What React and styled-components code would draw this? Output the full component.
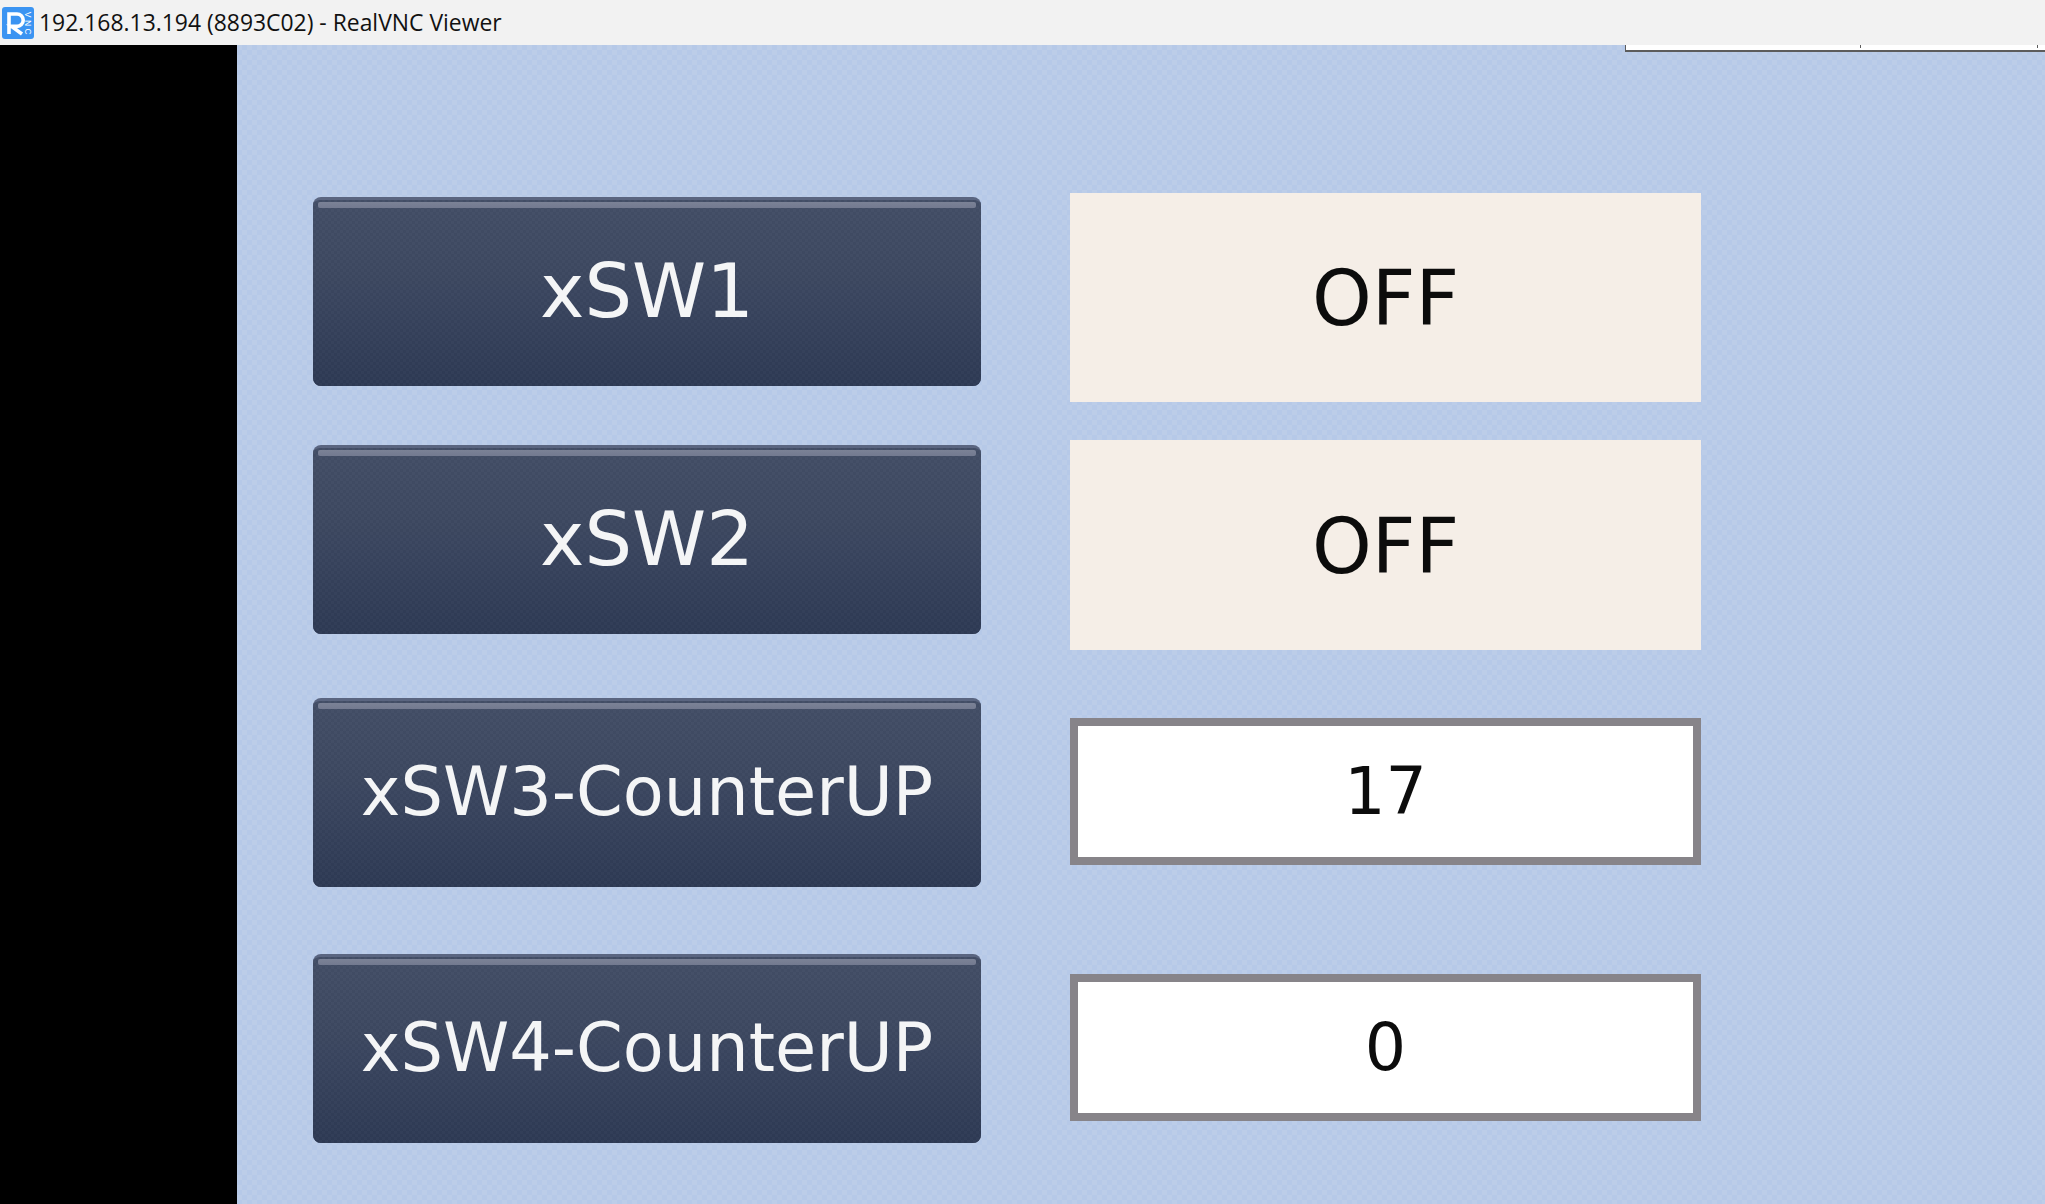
import React from 'react'
import styled, { createGlobalStyle } from 'styled-components'

const GlobalStyle = createGlobalStyle`
  html, body {
    margin: 0;
    padding: 0;
    background: #000;
    overflow: hidden;
  }
`

const Window = styled.div`
  width: 2045px;
  height: 1204px;
  display: flex;
  flex-direction: column;
  overflow: hidden;
`

const TitleBar = styled.div`
  height: 45px;
  flex: none;
  display: flex;
  align-items: center;
  gap: 5px;
  padding-left: 2px;
  background: #f2f2f2;
  position: relative;
  z-index: 2;
`

const Title = styled.span`
  font-family: "Open Sans", "Noto Sans", sans-serif;
  font-size: 22.9px;
  color: #111;
  white-space: nowrap;
`

const Viewer = styled.div`
  flex: 1;
  display: flex;
  background: #000;
`

const Screen = styled.div`
  position: relative;
  margin-left: 237px;
  flex: 1;
  display: flex;
  gap: 89px;
  padding-left: 76px;
  background-color: #b9cce9;
  background-image:
    repeating-conic-gradient(#b6c9e8 0 25%, #bccde8 0 50%);
  background-size: 10px 10px;
`

const CornerStrip = styled.div`
  position: absolute;
  top: 0;
  left: 1388px;
  right: 0;
  height: 5px;
  background: #fff;
  border-left: 1px solid #5c5c5c;
  border-bottom: 2px solid #5c5c5c;
`

const Tick = styled.i`
  position: absolute;
  top: 0;
  left: ${p => p.$left}px;
  width: 1px;
  height: 3px;
  background: #5c5c5c;
`

const Column = styled.div`
  display: flex;
  flex-direction: column;
  align-items: stretch;
`

const SwitchButton = styled.button`
  position: relative;
  box-sizing: border-box;
  width: 668px;
  height: 189px;
  margin: ${p => p.$top}px 0 0;
  padding: 0 0 3px;
  border: 0;
  border-radius: 8px;
  border-top: 3px solid #5a6580;
  background-color: #3a4560;
  background-image:
    repeating-conic-gradient(rgba(255, 255, 255, 0.015) 0 25%, rgba(0, 0, 0, 0.015) 0 50%),
    linear-gradient(to bottom, #434e67 0, #3d4861 40%, #2e3a54 100%);
  background-size: 6px 6px, 100% 100%;
  color: #f4f5f6;
  font-family: "DejaVu Sans", sans-serif;
  font-size: ${p => p.$size}px;
  line-height: 1;
  white-space: nowrap;

  &::before {
    content: "";
    position: absolute;
    top: 2px;
    left: 5px;
    right: 5px;
    height: 6px;
    background: linear-gradient(to bottom, #7b8296, #737a90);
    border-radius: 2px;
  }
`

const ButtonLabel = styled.span`
  display: block;
  filter: blur(0.6px);
`

const StateLamp = styled.div`
  box-sizing: border-box;
  width: 631px;
  height: ${p => p.$height}px;
  margin-top: ${p => p.$top}px;
  padding-top: 2px;
  display: flex;
  align-items: center;
  justify-content: center;
  background: #f5eee7;
  color: #0c0c0c;
  font-family: "DejaVu Sans", sans-serif;
  font-size: 76px;
`

const CounterBox = styled.div`
  box-sizing: border-box;
  width: 631px;
  height: 147px;
  margin-top: ${p => p.$top}px;
  display: flex;
  align-items: center;
  justify-content: center;
  background: #fff;
  border: 8px solid #878489;
  color: #0c0c0c;
  font-family: "DejaVu Sans", sans-serif;
  font-size: 65px;
`

const CellText = styled.span`
  filter: blur(0.7px);
`

const Logo = () => (
  <svg width="32" height="32" viewBox="0 0 32 32">
    <rect width="32" height="32" rx="3" fill="#3b94f2" />
    <path d="M7 27V7h8a6.2 6.2 0 0 1 0 12.4H9.5L20 27" fill="none" stroke="#fff" strokeWidth="3.6" />
    <g fontFamily="Liberation Sans" fontSize="8.5" fill="#fff" textAnchor="middle">
      <text transform="translate(22.5 7.5) rotate(90)">V</text>
      <text transform="translate(22.5 16) rotate(90)">N</text>
      <text transform="translate(22.5 24.5) rotate(90)">C</text>
    </g>
  </svg>
)

const buttons = [
  { label: 'xSW1', top: 152, size: 75 },
  { label: 'xSW2', top: 59, size: 75 },
  { label: 'xSW3-CounterUP', top: 64, size: 67 },
  { label: 'xSW4-CounterUP', top: 67, size: 67 },
]

export default function App() {
  return (
    <Window>
      <GlobalStyle />
      <TitleBar>
        <Logo />
        <Title>192.168.13.194 (8893C02) - RealVNC Viewer</Title>
      </TitleBar>
      <Viewer>
        <Screen>
          <CornerStrip>
            <Tick $left={234} />
            <Tick $left={411} />
          </CornerStrip>
          <Column>
            {buttons.map(b => (
              <SwitchButton key={b.label} $top={b.top} $size={b.size}>
                <ButtonLabel>{b.label}</ButtonLabel>
              </SwitchButton>
            ))}
          </Column>
          <Column>
            <StateLamp $top={148} $height={209}><CellText>OFF</CellText></StateLamp>
            <StateLamp $top={38} $height={210}><CellText>OFF</CellText></StateLamp>
            <CounterBox $top={68}><CellText>17</CellText></CounterBox>
            <CounterBox $top={109}><CellText>0</CellText></CounterBox>
          </Column>
        </Screen>
      </Viewer>
    </Window>
  )
}
